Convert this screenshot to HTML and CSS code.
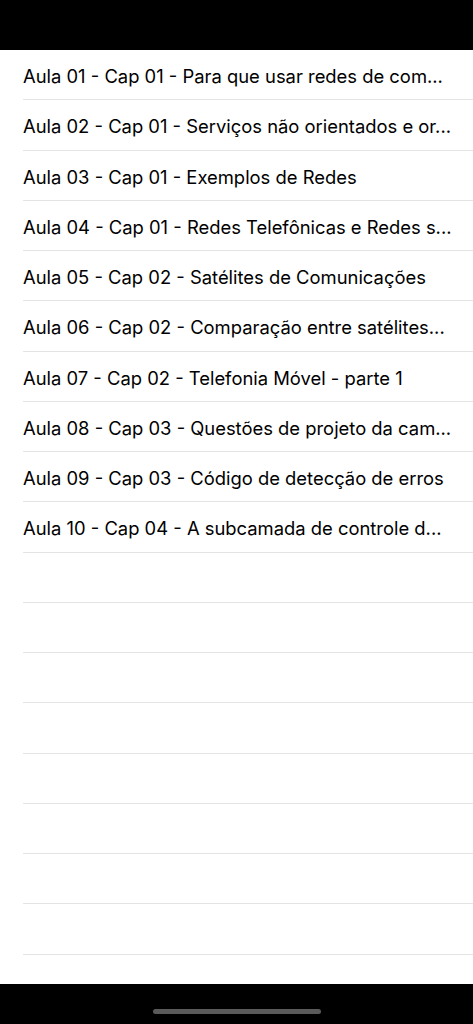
FILE: index.html
```html
<!DOCTYPE html>
<html lang="pt-BR">
<head>
    <meta charset="UTF-8">
    <meta name="viewport" content="width=device-width, initial-scale=1.0">
    <title>Aulas</title>
    <link rel="stylesheet" href="styles.css">
</head>
<body>
    <div class="screen">
        <div class="top-bar"></div>
        <ul class="list">
            <li class="row"><span>Aula 01 - Cap 01 - Para que usar redes de com...</span></li>
            <li class="row"><span>Aula 02 - Cap 01 - Serviços não orientados e or...</span></li>
            <li class="row"><span>Aula 03 - Cap 01 - Exemplos de Redes</span></li>
            <li class="row"><span>Aula 04 - Cap 01 - Redes Telefônicas e Redes s...</span></li>
            <li class="row"><span>Aula 05 - Cap 02 - Satélites de Comunicações</span></li>
            <li class="row"><span>Aula 06 - Cap 02 - Comparação entre satélites...</span></li>
            <li class="row"><span>Aula 07 - Cap 02 - Telefonia Móvel - parte 1</span></li>
            <li class="row"><span>Aula 08 - Cap 03 - Questões de projeto da cam...</span></li>
            <li class="row"><span>Aula 09 - Cap 03 - Código de detecção de erros</span></li>
            <li class="row"><span>Aula 10 - Cap 04 - A subcamada de controle d...</span></li>
            <li class="row empty"></li>
            <li class="row empty"></li>
            <li class="row empty"></li>
            <li class="row empty"></li>
            <li class="row empty"></li>
            <li class="row empty"></li>
            <li class="row empty"></li>
            <li class="row empty"></li>
        </ul>
        <div class="bottom-bar">
            <div class="home-indicator"></div>
        </div>
    </div>
</body>
</html>
```

FILE: styles.css
```css
* {
    margin: 0;
    padding: 0;
    box-sizing: border-box;
}

body {
    font-family: 'Inter', 'Roboto', sans-serif;
    background: #ffffff;
    color: #000000;
}

.screen {
    display: flex;
    flex-direction: column;
    height: 1024px;
}

.top-bar {
    height: 50px;
    background: #000000;
    flex-shrink: 0;
}

.list {
    list-style: none;
    flex: 1;
    background: #ffffff;
}

.row {
    height: 50.25px;
    margin-left: 23px;
    padding-right: 16px;
    padding-top: 3px;
    border-bottom: 1px solid #e4e4e6;
    display: flex;
    align-items: center;
    font-size: 18.4px;
    letter-spacing: 0;
}

.row span {
    white-space: nowrap;
}

.bottom-bar {
    height: 40px;
    background: #000000;
    flex-shrink: 0;
    display: flex;
    justify-content: center;
    padding-top: 25px;
}

.home-indicator {
    width: 168px;
    height: 5px;
    border-radius: 3px;
    background: #5a5a5a;
}
```
